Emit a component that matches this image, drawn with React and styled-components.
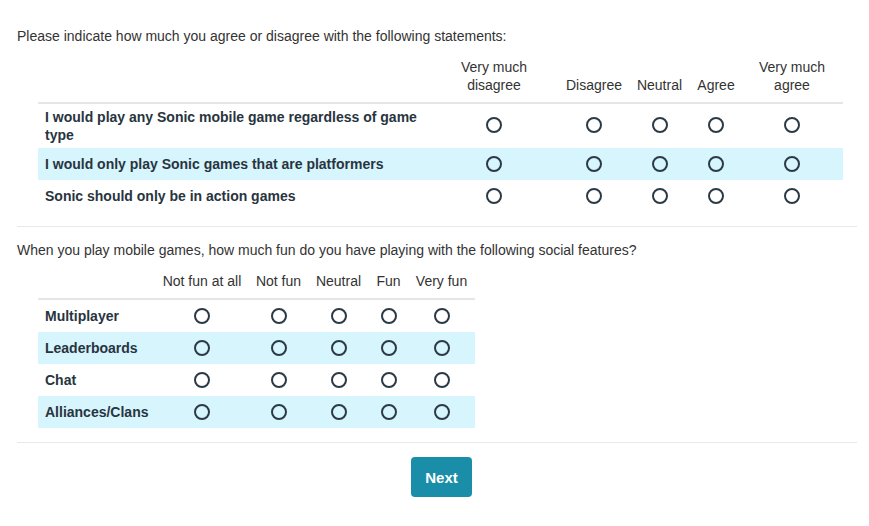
import styled, { createGlobalStyle } from 'styled-components'

const GlobalStyle = createGlobalStyle`
    body {
        margin: 0;
        background: #fff;
        font-family: "Liberation Sans", Arial, Helvetica, sans-serif;
        font-size: 14px;
        line-height: 18px;
        color: #333;
    }
`

const Pagina = styled.main`
    padding: 27px 12px 0 17px;
`

const Secao = styled.section`
    padding-bottom: 14px;
    border-bottom: 1px solid #e9e9e9;
    margin-bottom: 14px;
`

const Pergunta = styled.p`
    margin: 0 0 13px 0;
    color: #333;
`

const Tabela = styled.div`
    margin-left: 21px;
    width: ${props => props.largura}px;
`

const Linha = styled.div`
    display: grid;
    grid-template-columns: ${props => props.colunas};
    align-items: center;
    min-height: 32px;
    background: ${props => props.destaque ? '#d7f5fd' : 'transparent'};
`

const Cabecalho = styled(Linha)`
    align-items: end;
    min-height: 0;
    padding-bottom: 8px;
    border-bottom: 2px solid #e6e6e6;
`

const TituloColuna = styled.div`
    display: flex;
    justify-content: center;
    text-align: center;
    white-space: ${props => props.quebra ? 'normal' : 'nowrap'};
    & span {
        max-width: 90px;
    }
`

const Rotulo = styled.div`
    padding: 4px 8px 4px 7px;
    font-weight: bold;
    color: #28343e;
`

const Celula = styled.div`
    display: flex;
    justify-content: center;
    align-items: center;
    padding-bottom: ${props => props.alta ? '3px' : '0'};
`

const Radio = styled.input`
    appearance: none;
    margin: 0;
    width: 16px;
    height: 16px;
    border: 2px solid #2c3a46;
    border-radius: 50%;
    background: transparent;
    cursor: pointer;
    &:checked {
        background: radial-gradient(circle, #2c3a46 0 3px, transparent 4px);
    }
`

const Rodape = styled.div`
    display: flex;
    justify-content: center;
    padding-left: 9px;
`

const Botao = styled.button`
    width: 61px;
    height: 40px;
    border: none;
    border-radius: 4px;
    background: #1a8ea9;
    color: #fff;
    font-family: "Liberation Sans", Arial, Helvetica, sans-serif;
    font-size: 15px;
    font-weight: bold;
    cursor: pointer;
`

const concordancia = {
    colunas: '390px 132px 68px 63px 50px 102px',
    largura: 805,
    opcoes: ['Very much disagree', 'Disagree', 'Neutral', 'Agree', 'Very much agree'],
    itens: [
        'I would play any Sonic mobile game regardless of game type',
        'I would only play Sonic games that are platformers',
        'Sonic should only be in action games',
    ],
}

const diversao = {
    colunas: '117px 94px 59px 61px 39px 67px',
    largura: 437,
    opcoes: ['Not fun at all', 'Not fun', 'Neutral', 'Fun', 'Very fun'],
    itens: ['Multiplayer', 'Leaderboards', 'Chat', 'Alliances/Clans'],
}

function Matriz({ nome, dados, quebra }) {
    return (
        <Tabela largura={dados.largura}>
            <Cabecalho colunas={dados.colunas}>
                <div />
                {dados.opcoes.map(opcao => (
                    <TituloColuna key={opcao} quebra={quebra}>
                        <span>{opcao}</span>
                    </TituloColuna>
                ))}
            </Cabecalho>
            {dados.itens.map((item, i) => (
                <Linha key={item} colunas={dados.colunas} destaque={i % 2 === 1}>
                    <Rotulo>{item}</Rotulo>
                    {dados.opcoes.map(opcao => (
                        <Celula key={opcao} alta={item.length > 52}>
                            <Radio type="radio" name={`${nome}-${i}`} value={opcao} />
                        </Celula>
                    ))}
                </Linha>
            ))}
        </Tabela>
    )
}

function App() {
    return (
        <Pagina>
            <GlobalStyle />
            <Secao>
                <Pergunta>Please indicate how much you agree or disagree with the following statements:</Pergunta>
                <Matriz nome="concorda" dados={concordancia} quebra />
            </Secao>
            <Secao>
                <Pergunta>When you play mobile games, how much fun do you have playing with the following social features?</Pergunta>
                <Matriz nome="diversao" dados={diversao} />
            </Secao>
            <Rodape>
                <Botao>Next</Botao>
            </Rodape>
        </Pagina>
    )
}

export default App
